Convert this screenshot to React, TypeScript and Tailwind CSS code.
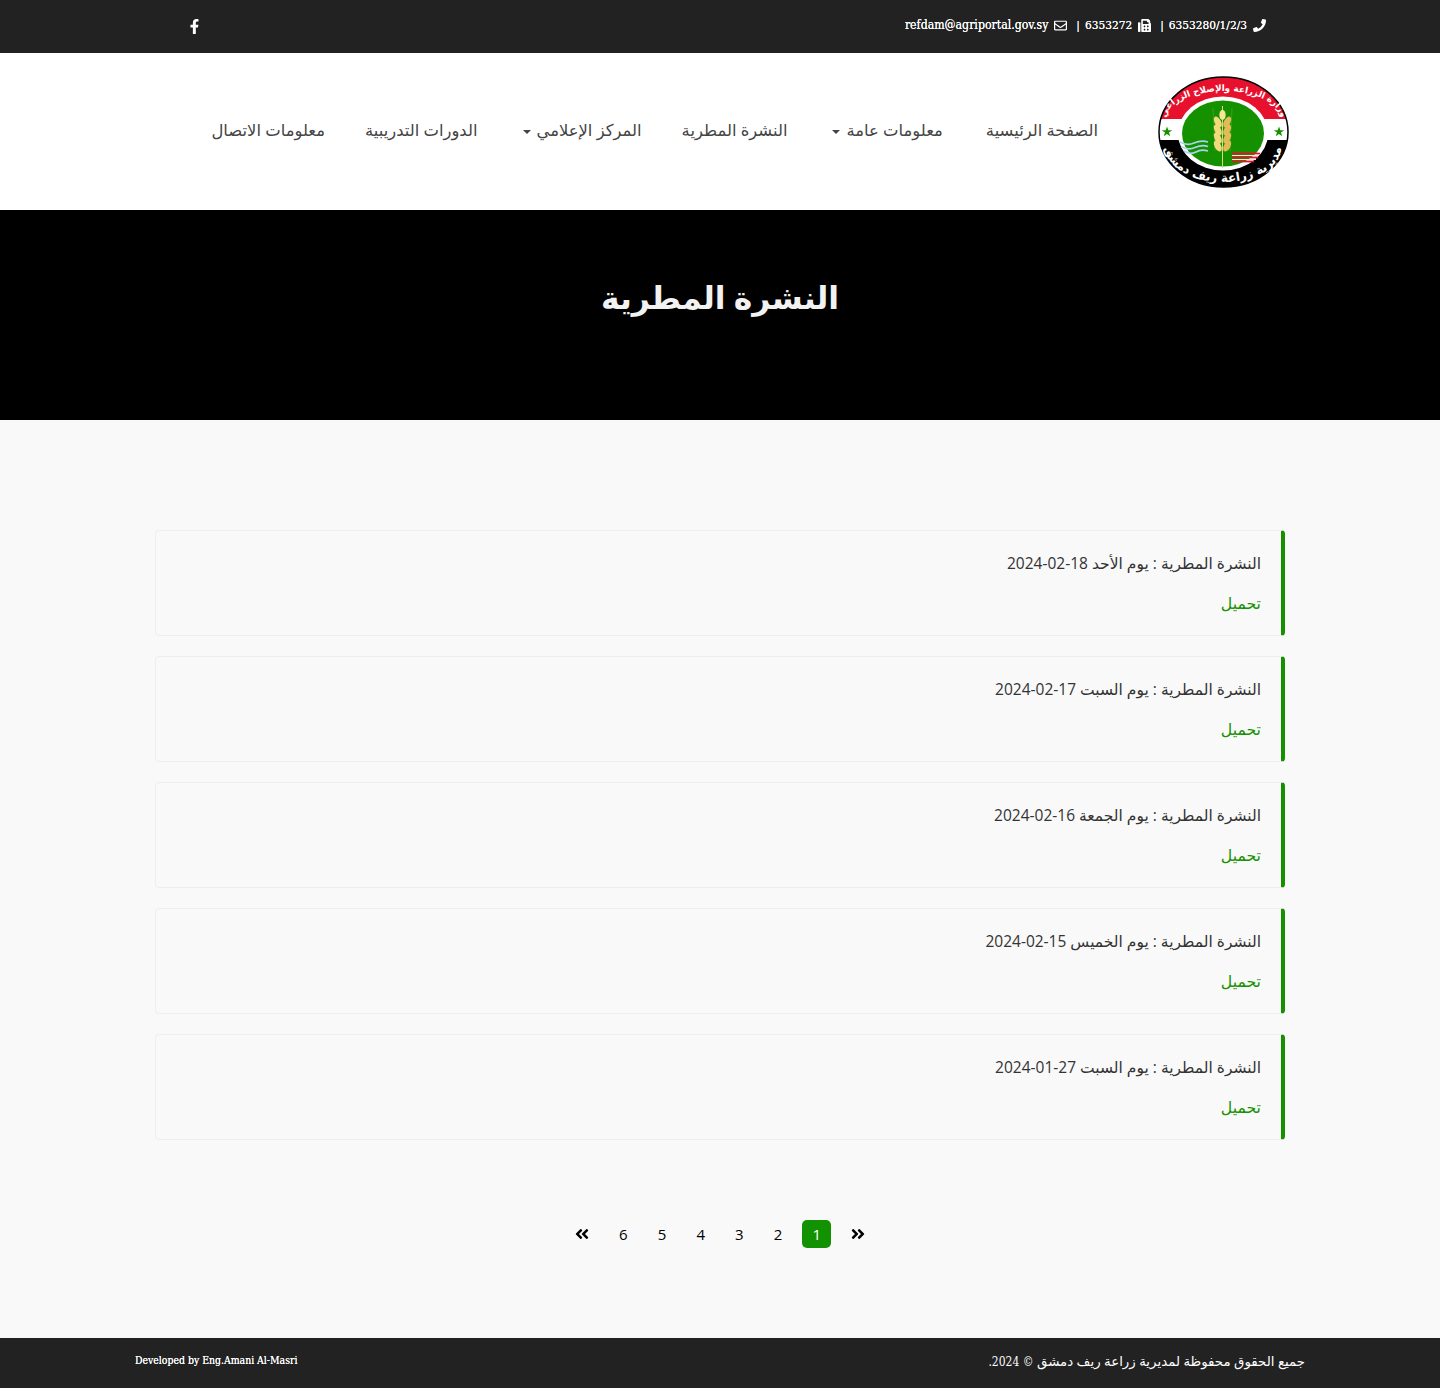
import { FaAngleDoubleLeft, FaAngleDoubleRight, FaFacebookF, FaFax, FaPhoneAlt, FaRegEnvelope } from 'react-icons/fa';

const bodyFont = "font-['Open_Sans','DejaVu_Sans',sans-serif]";
const slabFont = "font-['DejaVu_Serif_Condensed','DejaVu_Serif',serif]";

const navItems = [
  { label: 'الصفحة الرئيسية' },
  { label: 'معلومات عامة', caret: true },
  { label: 'النشرة المطرية' },
  { label: 'المركز الإعلامي', caret: true },
  { label: 'الدورات التدريبية' },
  { label: 'معلومات الاتصال' },
];

const bulletins = [
  'النشرة المطرية : يوم الأحد 18-02-2024',
  'النشرة المطرية : يوم السبت 17-02-2024',
  'النشرة المطرية : يوم الجمعة 16-02-2024',
  'النشرة المطرية : يوم الخميس 15-02-2024',
  'النشرة المطرية : يوم السبت 27-01-2024',
];

function Logo() {
  const grains = [0, 1, 2, 3];
  return (
    <svg width="132" height="112" viewBox="0 0 132 112" className="shrink-0">
      <defs>
        <clipPath id="logoClip">
          <ellipse cx="65.5" cy="56" rx="64.5" ry="55" />
        </clipPath>
        <path id="topArc" d="M 8 43 A 57.5 28 0 0 1 123 43" />
        <path id="bottomArc" d="M 8 72 A 57.5 34 0 0 0 123 72" />
      </defs>
      <g clipPath="url(#logoClip)">
        <rect x="0" y="0" width="132" height="43" fill="#e8112d" />
        <rect x="0" y="43" width="132" height="21" fill="#ffffff" />
        <rect x="0" y="64" width="132" height="48" fill="#000000" />
      </g>
      <ellipse cx="65.5" cy="56" rx="64.5" ry="55" fill="none" stroke="#000" strokeWidth="1.5" />
      <ellipse cx="65" cy="57.5" rx="45" ry="37" fill="#ffffff" />
      <ellipse cx="65" cy="57.5" rx="41" ry="33" fill="#159100" />
      <text fontFamily="DejaVu Sans, sans-serif" fontSize="8.8" fontWeight="700" fill="#fff">
        <textPath href="#topArc" startOffset="50%" textAnchor="middle">
          وزارة الزراعة والإصلاح الزراعي
        </textPath>
      </text>
      <text fontFamily="DejaVu Sans, sans-serif" fontSize="12" fontWeight="700" fill="#fff">
        <textPath href="#bottomArc" startOffset="50%" textAnchor="middle">
          مديرية زراعة ريف دمشق
        </textPath>
      </text>
      <polygon
        points="9,50.5 10.3,54.2 14.2,54.2 11,56.5 12.2,60.2 9,58 5.8,60.2 7,56.5 3.8,54.2 7.7,54.2"
        fill="#159100"
      />
      <polygon
        points="121,50.5 122.3,54.2 126.2,54.2 123,56.5 124.2,60.2 121,58 117.8,60.2 119,56.5 115.8,54.2 119.7,54.2"
        fill="#159100"
      />
      {/* wheat */}
      <g stroke="#5fae45" strokeWidth="0.5">
        <line x1="55" y1="32" x2="57" y2="75" />
        <line x1="74" y1="32" x2="72" y2="75" />
      </g>
      <line x1="64.5" y1="30" x2="64.5" y2="92" stroke="#d9d98a" strokeWidth="1" />
      <ellipse cx="64.5" cy="39" rx="3.2" ry="5" fill="#f6e596" />
      {grains.map((i) => (
        <g key={i}>
          <ellipse cx="59.8" cy={46 + i * 8} rx="3.2" ry="6" fill="#f3d97c" transform={`rotate(-28 59.8 ${46 + i * 8})`} />
          <ellipse cx="69.2" cy={46 + i * 8} rx="3.2" ry="6" fill="#e2bb55" transform={`rotate(28 69.2 ${46 + i * 8})`} />
        </g>
      ))}
      {/* water */}
      <g fill="none" stroke="#a9d3ee" strokeWidth="1.7">
        <path d="M 22 66 q 7 4 14 1 t 14 -1" />
        <path d="M 23 70.5 q 7 4 14 1 t 13 -1" />
        <path d="M 26 75 q 7 4 12 1 t 12 -1" />
      </g>
      {/* furrows */}
      <g stroke="#f4e9d8" strokeWidth="1">
        <line x1="74" y1="79.5" x2="100" y2="79.5" />
        <line x1="74" y1="83.5" x2="98" y2="83.5" />
      </g>
      <g stroke="#e8112d" strokeWidth="1.7">
        <line x1="74" y1="77.5" x2="102" y2="77.5" />
        <line x1="74" y1="81.5" x2="100" y2="81.5" />
        <line x1="74" y1="85.5" x2="96" y2="85.5" />
      </g>
    </svg>
  );
}

function Caret() {
  return <span className="inline-block w-0 h-0 mr-[6px] ml-[5px] mt-1 border-t-[4px] border-x-[4px] border-x-transparent border-t-[#444]" />;
}

function TopBar() {
  return (
    <div className={`h-[53px] bg-[#222] text-white flex items-center justify-between pr-[174px] pl-[187px] [text-shadow:0_0_0.4px_#fff] ${slabFont}`}>
      <div dir="rtl" className="flex items-center text-[11.8px] pb-[2px]">
        <FaPhoneAlt size={13} className="ml-[6px] -scale-x-100" />
        <span dir="ltr">6353280/1/2/3</span>
        <span className="mr-[5px] ml-[9px]">|</span>
        <FaFax size={13} className="ml-[6px]" />
        <span>6353272</span>
        <span className="mr-[5px] ml-[9px]">|</span>
        <FaRegEnvelope size={13} className="ml-[6px]" />
        <span className="text-[12.2px]">refdam@agriportal.gov.sy</span>
      </div>
      <FaFacebookF size={15} />
    </div>
  );
}

function Header() {
  return (
    <header className="h-[157px] bg-white flex items-center pr-[150px] pl-[211px]">
      <Logo />
      <nav className={`flex items-center gap-10 mr-[60px] pb-[2px] text-[16.4px] text-[#444] ${bodyFont}`}>
        {navItems.map((item) => (
          <a key={item.label} className="flex items-center whitespace-nowrap first:pl-[3px]">
            {item.label}
            {item.caret && <Caret />}
          </a>
        ))}
      </nav>
    </header>
  );
}

function BulletinCard({ title }: { title: string }) {
  return (
    <div className="h-[106px] border border-[#eee] border-r-4 border-r-[#159100] rounded-[4px] pt-[19px] pr-[20px]">
      <p className="text-[15.5px] leading-[26px] text-[#333]">{title}</p>
      <a className="block mt-[14px] text-[15.7px] leading-[26px] text-[#159100]">تحميل</a>
    </div>
  );
}

function Pagination() {
  return (
    <div className="flex items-center justify-center mt-[80px] text-[15px] text-black h-[28px]">
      <FaAngleDoubleRight size={16} className="mx-[7px]" />
      <div className="flex items-center gap-[9.7px] mx-[11.5px]">
        <span className="w-[29px] h-[28px] rounded-[5px] bg-[#129200] text-white flex items-center justify-center">1</span>
        {[2, 3, 4, 5, 6].map((n) => (
          <span key={n} className="w-[29px] h-[28px] flex items-center justify-center">
            {n}
          </span>
        ))}
      </div>
      <FaAngleDoubleLeft size={16} className="mx-[7px]" />
    </div>
  );
}

function Footer() {
  return (
    <footer className="h-[50px] bg-[#222] text-white flex items-center justify-between px-[135px]">
      <p className={`text-[13.35px] pb-[3px] ${bodyFont}`}>
        جميع الحقوق محفوظة لمديرية زراعة ريف دمشق <span className={`text-[12px] ${slabFont}`}>© 2024.</span>
      </p>
      <p dir="ltr" className={`text-[10.4px] pb-[5px] [text-shadow:0_0_0.4px_#fff] ${slabFont}`}>
        Developed by Eng.Amani Al-Masri
      </p>
    </footer>
  );
}

export default function App() {
  return (
    <div dir="rtl" className={`min-h-[1388px] bg-[#f9f9f9] ${bodyFont}`}>
      <TopBar />
      <Header />
      <section className="h-[210px] bg-black flex justify-center pt-[64px]">
        <h1 className="text-[31.4px] leading-[46px] font-bold text-[#f2f2f2]">النشرة المطرية</h1>
      </section>
      <main className="h-[918px] px-[155px] pt-[110px]">
        <div className="flex flex-col gap-5">
          {bulletins.map((title) => (
            <BulletinCard key={title} title={title} />
          ))}
        </div>
        <Pagination />
      </main>
      <Footer />
    </div>
  );
}
